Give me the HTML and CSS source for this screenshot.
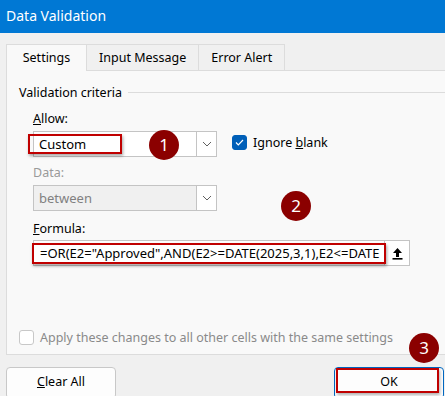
FILE: index.html
```html
<!DOCTYPE html>
<html>
  <head>
    <title>Data Validation</title>
    <link rel="stylesheet" href="styles.css">
  </head>
  <body>
    <div class="titlebar">Data Validation</div>
    <div class="dialog">
      <div class="tabs">
        <div class="tab active">Settings</div>
        <div class="tab">Input Message</div>
        <div class="tab">Error Alert</div>
      </div>
      <div class="panel">
        <div class="group-title">
          <span>Validation criteria</span>
          <span class="rule"></span>
        </div>

        <div class="label"><u>A</u>llow:</div>
        <div class="row">
          <div class="select">
            <span class="value">Custom</span>
            <span class="mark custom-mark"></span>
            <span class="badge badge-1">1</span>
            <span class="drop">
              <svg width="10" height="6" viewBox="0 0 10 6"><path d="M1 1l4 4 4-4" fill="none" stroke="#606060" stroke-width="1"/></svg>
            </span>
          </div>
          <label class="check">
            <span class="box checked">
              <svg width="9" height="7" viewBox="0 0 9 7"><path d="M1 3.5l2.3 2.3L8 1" fill="none" stroke="#fff" stroke-width="1.2"/></svg>
            </span>
            <span>Ignore <u>b</u>lank</span>
          </label>
        </div>

        <div class="label disabled">Data:</div>
        <div class="row">
          <div class="select readonly">
            <span class="value">between</span>
            <span class="drop">
              <svg width="10" height="6" viewBox="0 0 10 6"><path d="M1 1l4 4 4-4" fill="none" stroke="#606060" stroke-width="1"/></svg>
            </span>
          </div>
          <span class="badge badge-2">2</span>
        </div>

        <div class="label"><u>F</u>ormula:</div>
        <div class="formula">
          <span class="value">=OR(E2="Approved",AND(E2&gt;=DATE(2025,3,1),E2&lt;=DATE</span>
          <span class="mark formula-mark"></span>
          <span class="pick">
            <svg width="11" height="13" viewBox="0 0 11 13"><path d="M5.5 1L10 6H7v4H4V6H1z" fill="#000"/><rect x="0.5" y="11" width="10" height="1.6" fill="#000"/></svg>
          </span>
        </div>

        <label class="check apply">
          <span class="box"></span>
          <span>Apply these changes to all other cells with the same settings</span>
        </label>
        <span class="badge badge-3">3</span>
      </div>

      <div class="buttons">
        <div class="btn"><u>C</u>lear All</div>
        <div class="btn primary">OK<span class="mark ok-mark"></span></div>
      </div>
    </div>
  </body>
</html>
```

FILE: styles.css
```css
body {
  margin: 0;
  width: 445px;
  height: 396px;
  overflow: hidden;
  font-family: 'Noto Sans', 'Open Sans', sans-serif;
  font-size: 12px;
  color: #000;
  background-color: #f0f0f0;
}

.titlebar {
  height: 33px;
  line-height: 31px;
  padding-left: 6px;
  background-color: #0078d4;
  color: #fff;
  font-size: 14px;
}

.dialog {
  padding-left: 6px;
}

.tabs {
  display: flex;
  align-items: flex-end;
  height: 37px;
}

.tab {
  height: 25px;
  line-height: 25px;
  padding: 0 12px;
  border: 1px solid #dcdcdc;
  border-bottom: none;
  border-left: none;
  font-size: 12.5px;
}

.tab.active {
  height: 27px;
  width: 81px;
  box-sizing: border-box;
  padding: 0;
  text-align: center;
  border-left: 1px solid #dcdcdc;
  background-color: #f9f9f9;
  position: relative;
  z-index: 1;
  margin-bottom: -1px;
}

.panel {
  position: relative;
  width: 460px;
  height: 285px;
  box-sizing: border-box;
  border: 1px solid #dcdcdc;
  background-color: #f9f9f9;
  padding: 0 0 0 12px;
}

.group-title {
  display: flex;
  align-items: center;
  gap: 6px;
  margin-top: 13px;
  height: 17px;
  font-size: 12.5px;
}

.rule {
  flex: 1;
  border-top: 1px solid #dcdcdc;
}

.label {
  margin: 9px 0 0 14px;
  height: 17px;
  line-height: 17px;
  font-size: 12.5px;
}

.label.disabled {
  color: #9a9a9a;
  margin-top: 7px;
}

.row {
  display: flex;
  align-items: center;
  margin: 4px 0 0 14px;
  position: relative;
}

.select {
  position: relative;
  display: flex;
  width: 184px;
  height: 26px;
  box-sizing: border-box;
  border: 1px solid #c4c4c4;
  background-color: #fff;
}

.select.readonly {
  background-color: #f0f0f0;
  color: #808080;
}

.value {
  flex: 1;
  padding-left: 5px;
  line-height: 24px;
  font-size: 13px;
  white-space: nowrap;
  overflow: hidden;
}

.drop {
  width: 19px;
  border-left: 1px solid #c4c4c4;
  background-color: #fff;
  display: flex;
  align-items: center;
  justify-content: center;
}

.check {
  display: flex;
  align-items: center;
  gap: 6px;
  margin-left: 15px;
  margin-top: -4px;
  font-size: 12.5px;
}

.box {
  width: 15px;
  height: 15px;
  box-sizing: border-box;
  border: 1px solid #b8b8b8;
  border-radius: 3px;
  background-color: #fff;
  display: flex;
  align-items: center;
  justify-content: center;
}

.box.checked {
  background-color: #005fb8;
  border-color: #005fb8;
}

.formula {
  position: relative;
  display: flex;
  width: 377px;
  height: 26px;
  box-sizing: border-box;
  border: 1px solid #c4c4c4;
  background-color: #fff;
  margin: 3px 0 0 14px;
}

.formula .value {
  padding-left: 6px;
  font-size: 13px;
}

.pick {
  width: 24px;
  border-left: 1px solid #c4c4c4;
  display: flex;
  align-items: center;
  justify-content: center;
}

.apply {
  margin: 63px 0 0 0;
  height: 17px;
  color: #8a8a8a;
  font-size: 12.5px;
}

.apply .box {
  border-color: #c8c8c8;
}

/* annotation overlays */
.mark {
  position: absolute;
  border: 2px solid #c00000;
  box-shadow: 1px 2px 3px rgba(0, 0, 0, 0.35);
  pointer-events: none;
}

.custom-mark {
  left: -6px;
  top: 2px;
  width: 90px;
  height: 16px;
}

.formula-mark {
  left: -2px;
  top: 2px;
  width: 350px;
  height: 17px;
}

.badge {
  position: absolute;
  width: 30px;
  height: 30px;
  border-radius: 50%;
  background-color: #8b0000;
  color: #fff;
  font-size: 17px;
  line-height: 30px;
  text-align: center;
}

.badge-1 {
  left: 115px;
  top: -2px;
}

.badge-2 {
  left: 248px;
  top: 6px;
}

.badge-3 {
  left: 402px;
  top: 262px;
}

.buttons {
  display: flex;
  justify-content: space-between;
  margin-top: 12px;
  padding-right: 1px;
}

.btn {
  position: relative;
  width: 110px;
  height: 32px;
  box-sizing: border-box;
  border: 1px solid #c8c8c8;
  border-radius: 4px;
  background-color: #fdfdfd;
  text-align: center;
  line-height: 28px;
  font-size: 12.5px;
}

.btn.primary {
  border-color: #0067c0;
}

.ok-mark {
  left: 1px;
  top: 0px;
  width: 99px;
  height: 21px;
  box-shadow: 1px 2px 3px rgba(0, 0, 0, 0.3);
}
```
